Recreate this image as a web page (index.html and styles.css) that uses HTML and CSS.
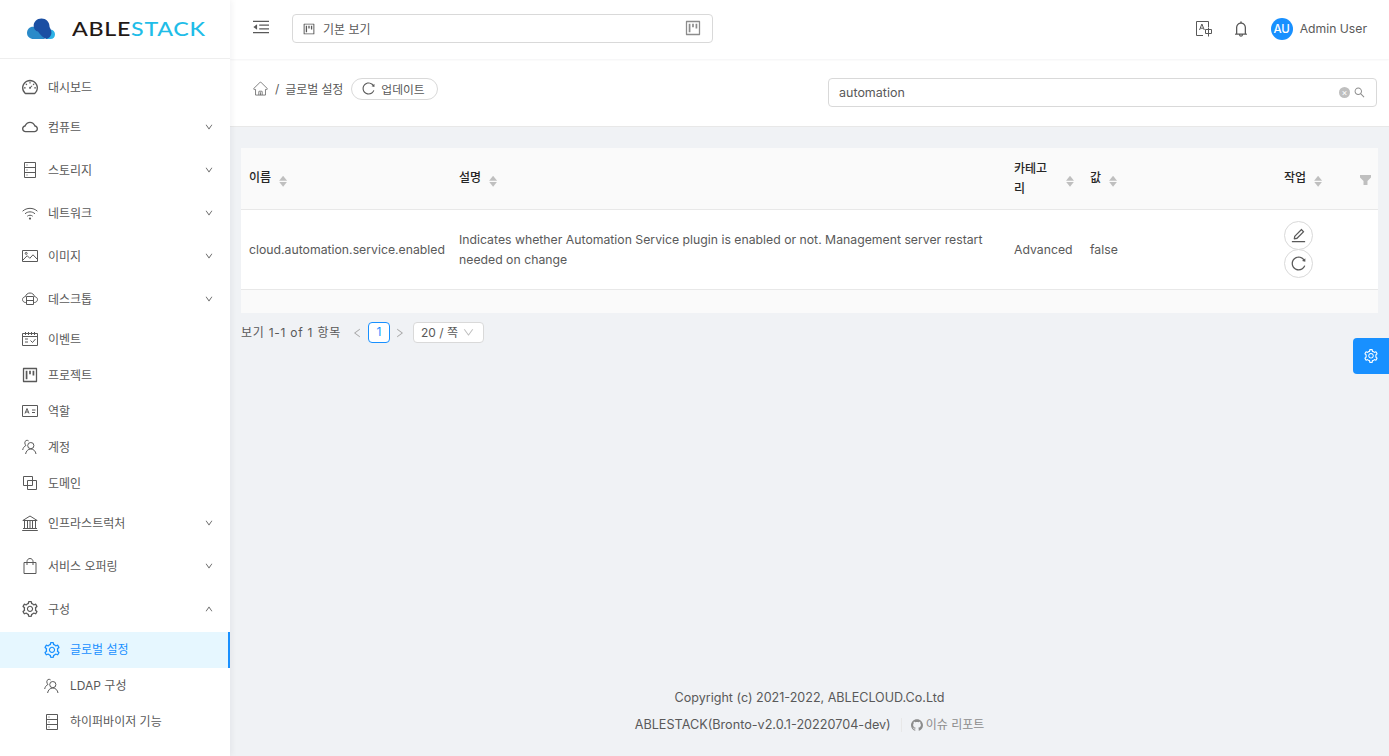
FILE: index.html
```html
<!DOCTYPE html>
<html lang="ko">
<head>
<meta charset="utf-8">
<title>글로벌 설정</title>
<link rel="stylesheet" href="styles.css">
</head>
<body>
<svg class="defs" width="0" height="0" aria-hidden="true">
  <symbol id="i-down" viewBox="64 64 896 896"><path d="M884 256h-75c-5.1 0-9.9 2.5-12.9 6.6L512 654.2 227.9 262.6c-3-4.1-7.8-6.6-12.9-6.6h-75c-6.5 0-10.3 7.4-6.5 12.7l352.6 486.1c12.8 17.6 39 17.6 51.7 0l352.6-486.1c3.9-5.3.1-12.7-6.4-12.7z"/></symbol>
  <symbol id="i-project" viewBox="64 64 896 896"><path d="M280 752h80c4.4 0 8-3.6 8-8V280c0-4.4-3.6-8-8-8h-80c-4.4 0-8 3.6-8 8v464c0 4.4 3.6 8 8 8zm192-280h80c4.4 0 8-3.6 8-8V280c0-4.4-3.6-8-8-8h-80c-4.4 0-8 3.6-8 8v184c0 4.4 3.6 8 8 8zm192 72h80c4.4 0 8-3.6 8-8V280c0-4.4-3.6-8-8-8h-80c-4.4 0-8 3.6-8 8v256c0 4.4 3.6 8 8 8zm216-432H144c-17.7 0-32 14.3-32 32v736c0 17.7 14.3 32 32 32h736c17.7 0 32-14.3 32-32V144c0-17.7-14.3-32-32-32zm-40 728H184V184h656v656z"/></symbol>
  <symbol id="i-reload" viewBox="64 64 896 896"><path d="M909.1 209.3l-56.4 44.1C775.8 155.1 656.2 92 521.9 92 290 92 102.3 279.5 102 511.5 101.7 743.7 289.8 932 521.9 932c181.3 0 335.8-115 394.6-276.1 1.5-4.2-.7-8.9-4.9-10.3l-56.7-19.5a8 8 0 0 0-10.1 4.8c-1.8 5-3.8 10-5.9 14.9-17.3 41-42.1 77.8-73.7 109.4A344.77 344.77 0 0 1 655.9 829c-42.3 17.9-87.4 27-133.8 27-46.5 0-91.5-9.1-133.8-27A341.5 341.5 0 0 1 279 755.2a342.16 342.16 0 0 1-73.7-109.4c-17.9-42.4-27-87.4-27-133.9s9.1-91.5 27-133.9c17.3-41 42.1-77.8 73.7-109.4 31.6-31.6 68.4-56.4 109.3-73.8 42.3-17.9 87.4-27 133.8-27 46.5 0 91.5 9.1 133.8 27a341.5 341.5 0 0 1 109.3 73.8c9.9 9.9 19.2 20.4 27.8 31.4l-60.2 47a8 8 0 0 0 3 14.1l175.6 43c5 1.2 9.9-2.6 9.9-7.7l.8-180.9c-.1-6.6-7.8-10.3-13-6.2z"/></symbol>
  <symbol id="i-setting" viewBox="64 64 896 896"><path d="M924.8 625.7l-65.5-56c3.1-19 4.7-38.4 4.7-57.8s-1.6-38.8-4.7-57.8l65.5-56a32.03 32.03 0 0 0 9.3-35.2l-.9-2.6a443.74 443.74 0 0 0-79.7-137.9l-1.8-2.1a32.12 32.12 0 0 0-35.1-9.5l-81.3 28.9c-30-24.6-63.5-44-99.7-57.6l-15.7-85a32.05 32.05 0 0 0-25.8-25.7l-2.7-.5c-52.1-9.4-106.9-9.4-159 0l-2.7.5a32.05 32.05 0 0 0-25.8 25.7l-15.8 85.4a351.86 351.86 0 0 0-99 57.4l-81.9-29.1a32 32 0 0 0-35.1 9.5l-1.8 2.1a446.02 446.02 0 0 0-79.7 137.9l-.9 2.6c-4.5 12.5-.8 26.5 9.3 35.2l66.3 56.6c-3.1 18.8-4.6 38-4.6 57.1 0 19.2 1.5 38.4 4.6 57.1L99 625.5a32.03 32.03 0 0 0-9.3 35.2l.9 2.6c18.1 50.4 44.9 96.9 79.7 137.9l1.8 2.1a32.12 32.12 0 0 0 35.1 9.5l81.9-29.1c29.8 24.5 63.1 43.9 99 57.4l15.8 85.4a32.05 32.05 0 0 0 25.8 25.7l2.7.5a449.4 449.4 0 0 0 159 0l2.7-.5a32.05 32.05 0 0 0 25.8-25.7l15.7-85a350 350 0 0 0 99.7-57.6l81.3 28.9a32 32 0 0 0 35.1-9.5l1.8-2.1c34.8-41.1 61.6-87.5 79.7-137.9l.9-2.6c4.5-12.3.8-26.3-9.3-35zM788.3 465.9c2.5 15.1 3.8 30.6 3.8 46.1s-1.3 31-3.8 46.1l-6.6 40.1 74.7 63.9a370.03 370.03 0 0 1-42.6 73.6L721 702.8l-31.4 25.8c-23.9 19.6-50.5 35-79.3 45.8l-38.1 14.3-17.9 97a377.5 377.5 0 0 1-85 0l-17.9-97.2-37.8-14.5c-28.5-10.8-55-26.2-78.7-45.7l-31.4-25.9-93.4 33.2c-17-22.9-31.2-47.6-42.6-73.6l75.5-64.5-6.5-40c-2.4-14.9-3.7-30.3-3.7-45.5 0-15.3 1.2-30.6 3.7-45.5l6.5-40-75.5-64.5c11.3-26.1 25.6-50.7 42.6-73.6l93.4 33.2 31.4-25.9c23.7-19.5 50.2-34.9 78.7-45.7l37.9-14.3 17.9-97.2c28.1-3.2 56.8-3.2 85 0l17.9 97 38.1 14.3c28.7 10.8 55.4 26.2 79.3 45.8l31.4 25.8 92.8-32.9c17 22.9 31.2 47.6 42.6 73.6L781.8 426l6.5 39.9zM512 326c-97.2 0-176 78.8-176 176s78.8 176 176 176 176-78.8 176-176-78.8-176-176-176zm79.2 255.2A111.6 111.6 0 0 1 512 614c-29.9 0-58-11.7-79.2-32.8A111.6 111.6 0 0 1 400 502c0-29.9 11.7-58 32.8-79.2C454 401.6 482.1 390 512 390c29.9 0 58 11.6 79.2 32.8A111.6 111.6 0 0 1 624 502c0 29.9-11.7 58-32.8 79.2z"/></symbol>
  <symbol id="i-bell" viewBox="64 64 896 896"><path d="M816 768h-24V428c0-141.1-104.3-257.7-240-277.1V112c0-22.1-17.9-40-40-40s-40 17.9-40 40v38.9c-135.7 19.4-240 136-240 277.1v340h-24c-17.7 0-32 14.3-32 32v32c0 4.4 3.6 8 8 8h216c0 61.8 50.2 112 112 112s112-50.2 112-112h216c4.4 0 8-3.6 8-8v-32c0-17.7-14.3-32-32-32zM512 888c-26.5 0-48-21.5-48-48h96c0 26.5-21.5 48-48 48zM304 768V428c0-55.6 21.6-107.8 60.9-147.1S456.4 220 512 220c55.6 0 107.8 21.6 147.1 60.9S720 372.4 720 428v340H304z"/></symbol>
  <symbol id="i-search" viewBox="64 64 896 896"><path d="M909.6 854.5L649.9 594.8C690.2 542.7 712 479 712 412c0-80.2-31.3-155.4-87.9-212.1-56.6-56.7-132-87.9-212.1-87.9s-155.5 31.3-212.1 87.9C143.2 256.5 112 331.8 112 412c0 80.1 31.3 155.5 87.9 212.1C256.5 680.8 331.8 712 412 712c67 0 130.6-21.8 182.7-62l259.7 259.6a8.2 8.2 0 0 0 11.6 0l43.6-43.5a8.2 8.2 0 0 0 0-11.6zM570.4 570.4C528 612.7 471.8 636 412 636s-116-23.3-158.4-65.6C211.3 528 188 471.8 188 412s23.3-116.1 65.6-158.4C296 211.3 352.2 188 412 188s116.1 23.2 158.4 65.6S636 352.2 636 412s-23.3 116.1-65.6 158.4z"/></symbol>
  <symbol id="i-edit" viewBox="64 64 896 896"><path d="M257.7 752c2 0 4-.2 6-.5L431.9 722c2-.4 3.9-1.3 5.3-2.8l423.9-423.9a9.96 9.96 0 0 0 0-14.1L694.9 114.9c-1.9-1.9-4.4-2.9-7.1-2.9s-5.2 1-7.1 2.9L256.8 538.8c-1.5 1.5-2.4 3.3-2.8 5.3l-29.5 168.2a33.5 33.5 0 0 0 9.4 29.8c6.6 6.4 14.9 9.9 23.8 9.9zm67.4-174.4L687.8 215l73.3 73.3-362.7 362.6-88.9 15.7 15.6-89zM880 836H144c-17.7 0-32 14.3-32 32v36c0 4.4 3.6 8 8 8h784c4.4 0 8-3.6 8-8v-36c0-17.7-14.3-32-32-32z"/></symbol>
  <symbol id="i-cloud" viewBox="64 64 896 896"><path d="M811.4 418.7C765.6 297.9 648.9 212 512.2 212S258.8 297.8 213 418.6C127.3 441.1 64 519.1 64 612c0 110.5 89.5 200 199.9 200h496.2C870.5 812 960 722.5 960 612c0-92.7-63.1-170.7-148.6-193.3zm36.3 281a123.07 123.07 0 0 1-87.6 36.3H263.9c-33.1 0-64.2-12.9-87.6-36.3A123.3 123.3 0 0 1 140 612c0-28 9.1-54.3 26.2-76.3a125.7 125.7 0 0 1 66.1-43.7l37.9-9.9 13.9-36.6c8.6-22.8 20.6-44.1 35.7-63.4a245.6 245.6 0 0 1 52.4-49.9c41.1-28.9 89.5-44.2 140-44.2s98.9 15.3 140 44.2c19.9 14 37.5 30.8 52.4 49.9 15.1 19.3 27.1 40.6 35.7 63.4l13.8 36.5 37.8 10c54.3 14.5 92.1 63.8 92.1 120 0 33.1-12.9 64.3-36.3 87.7z"/></symbol>
  <symbol id="i-github" viewBox="64 64 896 896"><path d="M511.6 76.3C264.3 76.2 64 276.4 64 523.5 64 718.9 189.3 885 363.8 946c23.5 5.9 19.9-10.8 19.9-22.2v-77.5c-135.7 15.9-141.2-73.9-150.3-88.9C215 726 171.5 718 184.5 703c30.9-15.9 62.4 4 98.9 57.9 26.4 39.1 77.9 32.5 104 26 5.7-23.5 17.9-44.5 34.7-60.8-140.6-25.2-199.2-111-199.2-213 0-49.5 16.3-95 48.3-131.7-20.4-60.5 1.9-112.3 4.9-120 58.1-5.2 118.5 41.6 123.2 45.3 33-8.9 70.7-13.6 112.9-13.6 42.4 0 80.2 4.9 113.5 13.9 11.3-8.6 67.3-48.8 121.3-43.9 2.9 7.7 24.7 58.3 5.5 118 32.4 36.8 48.9 82.7 48.9 132.3 0 102.2-59 188.1-200 212.9a127.5 127.5 0 0 1 38.1 91v112.5c.8 9 0 17.9 15 17.9 177.1-59.7 304.6-227 304.6-424.1 0-247.2-200.4-447.3-447.5-447.3z"/></symbol>
  <symbol id="i-home" viewBox="0 0 16 16"><path class="ln thin" d="M.8 8L7.300 1.600c.4-.4 1-.4 1.400 0L15.200 8c.3.5 0 1-.5 1H13.300v6H2.700V9H1.300c-.5 0-.8-.5-.5-1zM6.200 15v-3.800c0-.2.1-.3.300-.3h3c.2 0 .3.1.3.3V15M8 12v3"/></symbol>
  <symbol id="i-dashboard" viewBox="64 64 896 896"><path d="M924.8 385.6a446.7 446.7 0 0 0-96-142.4 446.7 446.7 0 0 0-142.4-96C631.1 123.8 572.5 112 512 112s-119.1 11.8-174.4 35.2a446.7 446.7 0 0 0-142.4 96 446.7 446.7 0 0 0-96 142.4C75.8 440.9 64 499.5 64 560c0 132.7 58.3 257.7 159.9 343.1l1.7 1.4c5.8 4.8 13.1 7.5 20.6 7.5h531.7c7.5 0 14.8-2.7 20.6-7.5l1.7-1.4C901.7 817.7 960 692.7 960 560c0-60.5-11.9-119.1-35.2-174.4zM761.4 836H262.6A371.12 371.12 0 0 1 140 560c0-99.4 38.7-192.8 109-263 70.3-70.3 163.7-109 263-109 99.4 0 192.8 38.7 263 109 70.3 70.3 109 163.7 109 263 0 105.6-44.5 205.5-122.6 276zM623.5 421.5a8.03 8.03 0 0 0-11.3 0L527.7 506c-18.7-5-39.4-.2-54.1 14.5a55.95 55.95 0 0 0 0 79.2 55.95 55.95 0 0 0 79.2 0 55.87 55.87 0 0 0 14.5-54.1l84.5-84.5c3.1-3.1 3.1-8.2 0-11.3l-28.3-28.3zM490 320h44c4.4 0 8-3.6 8-8v-80c0-4.4-3.6-8-8-8h-44c-4.4 0-8 3.6-8 8v80c0 4.4 3.6 8 8 8zm260 218v44c0 4.4 3.6 8 8 8h80c4.4 0 8-3.6 8-8v-44c0-4.4-3.6-8-8-8h-80c-4.4 0-8 3.6-8 8zm12.7-197.2l-31.1-31.1a8.03 8.03 0 0 0-11.3 0l-56.6 56.6a8.03 8.03 0 0 0 0 11.3l31.1 31.1c3.1 3.1 8.2 3.1 11.3 0l56.6-56.6c3.1-3.1 3.1-8.2 0-11.3zm-458.6-31.1a8.03 8.03 0 0 0-11.3 0l-31.1 31.1a8.03 8.03 0 0 0 0 11.3l56.6 56.6c3.1 3.1 8.2 3.1 11.3 0l31.1-31.1c3.1-3.1 3.1-8.2 0-11.3l-56.6-56.6zM262 530h-80c-4.4 0-8 3.6-8 8v44c0 4.4 3.6 8 8 8h80c4.4 0 8-3.6 8-8v-44c0-4.4-3.6-8-8-8z"/></symbol>
  <symbol id="i-storage" viewBox="0 0 16 16"><path class="ln" d="M2.500 .5h11v15h-11zM2.500 5.500h11M2.500 10.500h11"/><path class="ln" d="M4.500 3h1M4.500 8h1M4.500 13h1"/></symbol>
  <symbol id="i-wifi" viewBox="0 0 16 16"><path class="ln" d="M.6 6.200C4.600 2.400 11.400 2.400 15.400 6.200M3 8.800c2.800-2.600 7.200-2.600 10 0M5.300 11.200c1.500-1.300 3.900-1.300 5.400 0"/><circle cx="8" cy="13.600" r="1.100"/></symbol>
  <symbol id="i-picture" viewBox="0 0 16 16"><path class="ln" d="M.5 2.500h15v11H.5z"/><path class="ln" d="M1 12l4.200-4.300 2.600 2.600L11 6.800l4.400 4.600"/><circle class="ln" cx="4.200" cy="5.400" r="1"/></symbol>
  <symbol id="i-desktop" viewBox="0 0 16 16"><path class="ln" d="M3.400 5.600C4 3.400 5.800 2 8 2s4 1.400 4.600 3.600c1.700.3 2.900 1.500 2.900 2.900s-1.200 2.900-2.900 3H12M3.400 5.600C1.700 5.900.5 7 .5 8.500s1.200 2.900 2.900 3H4"/><path class="ln" d="M4.500 5.500h7v8h-7zM4.500 9.500h7"/></symbol>
  <symbol id="i-schedule" viewBox="0 0 16 16"><path class="ln" d="M.5 2.500h15v12H.5zM.5 5.500h15M3.500 1v3M6.500 1v3M9.500 1v3M12.500 1v3M3 8h3M3 11h3M8.500 9.500l2 2 3-3.500"/></symbol>
  <symbol id="i-idcard" viewBox="0 0 16 16"><path class="ln" d="M.5 2.500h15v11H.5zM10 7h3.500M10 9.500h3"/><path class="ln" d="M3 10.500L5 5.500l2 5M3.800 9h2.400"/></symbol>
  <symbol id="i-team" viewBox="0 0 16 16"><circle class="ln" cx="8.800" cy="6.600" r="3.100"/><path class="ln" d="M3.600 15c.4-2.800 2.400-5 5.200-5s4.800 2.200 5.200 5M6.600 1.900C5 .6 2.800 1.500 2.800 3.800c0 1.100.5 2 1.200 2.600C2.200 7.300 1 9 .7 11"/></symbol>
  <symbol id="i-block" viewBox="0 0 16 16"><path class="ln" d="M1.500 1.500h9v9h-9zM5.500 5.500h9v9h-9z"/></symbol>
  <symbol id="i-bank" viewBox="0 0 16 16"><path class="ln" d="M.8 5.500L8 1l7.200 4.500zM2.500 5.500v8M5.500 5.500v8M8 5.500v8M10.500 5.500v8M13.500 5.500v8M1 13.500h14M.2 15.500h15.600"/></symbol>
  <symbol id="i-bag" viewBox="0 0 16 16"><path class="ln" d="M2 4.500h12v11H2zM5 7V3.400C5 1.800 6.300 .5 8 .5s3 1.300 3 2.900V7"/></symbol>
  <symbol id="i-translate" viewBox="0 0 18 18"><path class="ln" d="M13.500 7V1.500h-12v14H8"/><path class="ln" d="M4.500 10l2.400-6 2.400 6M5.400 8.200h3"/><path class="ln" d="M10.500 9.500h6v4h-6zM13.500 7.500v9"/></symbol>
  <symbol id="i-outdent" viewBox="0 0 18 14"><path d="M0 0h18v1.300H0zM0 12.700h18V14H0zM7 4.200h11v1.300H7zM7 8.500h11v1.300H7zM4.600 4v6.200L.4 7.100z"/></symbol>
</svg>

<div class="app">
  <aside class="sidebar">
    <div class="logo">
      <svg class="logo-mark" viewBox="0 0 30 22" width="30" height="22" aria-hidden="true">
        <path fill="#2db2e6" d="M16 21h7.500c2.800 0 4.500-2 4.500-4.800 0-2.600-1.800-4.600-4.400-4.800L19 21z"/>
        <path fill="#2a8ac9" d="M6.500 21C3 21 0 18.500 0 15s2.500-6.200 6-6.200c3 0 5 1.500 7 4.500L18 21z"/>
        <path fill="#1b4fa3" d="M19.500 21c-3-.8-6.200-4-8.500-7.500-2.500-.2-4-3-4.300-5C6.200 4 10 .5 14.500 .5c4.500 0 8 3.500 8 8 0 .8 1 2 1.500 3.500C25.500 16.500 23 20 19.500 21z"/>
      </svg>
      <span class="logo-text"><span class="logo-dark">ABLE</span><span class="logo-cyan">STACK</span></span>
    </div>
    <nav class="menu">
      <a class="item"><svg class="ic"><use href="#i-dashboard"/></svg><span>대시보드</span></a>
      <a class="sub"><svg class="ic"><use href="#i-cloud"/></svg><span>컴퓨트</span><svg class="chev"><use href="#i-down"/></svg></a>
      <a class="sub"><svg class="ic"><use href="#i-storage"/></svg><span>스토리지</span><svg class="chev"><use href="#i-down"/></svg></a>
      <a class="sub"><svg class="ic"><use href="#i-wifi"/></svg><span>네트워크</span><svg class="chev"><use href="#i-down"/></svg></a>
      <a class="sub"><svg class="ic"><use href="#i-picture"/></svg><span>이미지</span><svg class="chev"><use href="#i-down"/></svg></a>
      <a class="sub"><svg class="ic"><use href="#i-desktop"/></svg><span>데스크톱</span><svg class="chev"><use href="#i-down"/></svg></a>
      <a class="item"><svg class="ic"><use href="#i-schedule"/></svg><span>이벤트</span></a>
      <a class="item"><svg class="ic"><use href="#i-project"/></svg><span>프로젝트</span></a>
      <a class="item"><svg class="ic"><use href="#i-idcard"/></svg><span>역할</span></a>
      <a class="item"><svg class="ic"><use href="#i-team"/></svg><span>계정</span></a>
      <a class="item"><svg class="ic"><use href="#i-block"/></svg><span>도메인</span></a>
      <a class="sub"><svg class="ic"><use href="#i-bank"/></svg><span>인프라스트럭처</span><svg class="chev"><use href="#i-down"/></svg></a>
      <a class="sub"><svg class="ic"><use href="#i-bag"/></svg><span>서비스 오퍼링</span><svg class="chev"><use href="#i-down"/></svg></a>
      <a class="sub"><svg class="ic"><use href="#i-setting"/></svg><span>구성</span><svg class="chev up"><use href="#i-down"/></svg></a>
      <a class="child active"><svg class="ic"><use href="#i-setting"/></svg><span>글로벌 설정</span></a>
      <a class="child"><svg class="ic"><use href="#i-team"/></svg><span>LDAP 구성</span></a>
      <a class="child"><svg class="ic"><use href="#i-storage"/></svg><span>하이퍼바이저 기능</span></a>
    </nav>
  </aside>

  <div class="main">
    <header class="topbar">
      <svg class="outdent"><use href="#i-outdent"/></svg>
      <div class="project-select">
        <svg class="ps-ic"><use href="#i-project"/></svg>
        <span class="ps-label">기본 보기</span>
        <svg class="ps-end"><use href="#i-project"/></svg>
      </div>
      <div class="top-right">
        <svg class="tr-translate"><use href="#i-translate"/></svg>
        <svg class="tr-bell"><use href="#i-bell"/></svg>
        <span class="avatar">AU</span>
        <span class="user">Admin User</span>
      </div>
    </header>

    <section class="crumbbar">
      <svg class="home"><use href="#i-home"/></svg>
      <span class="slash">/</span>
      <span class="crumb">글로벌 설정</span>
      <button class="refresh" type="button"><svg><use href="#i-reload"/></svg><span>업데이트</span></button>
      <div class="search">
        <span class="search-text">automation</span>
        <span class="clear">×</span>
        <svg class="search-ic"><use href="#i-search"/></svg>
      </div>
    </section>

    <main class="content">
      <table class="grid">
        <colgroup>
          <col class="c1"><col class="c2"><col class="c3"><col class="c4"><col class="c5">
        </colgroup>
        <thead>
          <tr>
            <th><div class="th"><span>이름</span><i class="sort"></i></div></th>
            <th><div class="th"><span>설명</span><i class="sort"></i></div></th>
            <th><div class="th th-cat"><span>카테고리</span><i class="sort"></i></div></th>
            <th><div class="th"><span>값</span><i class="sort"></i></div></th>
            <th class="th-last"><div class="th"><span>작업</span><i class="sort"></i></div><i class="funnel"></i></th>
          </tr>
        </thead>
        <tbody>
          <tr>
            <td>cloud.automation.service.enabled</td>
            <td>Indicates whether Automation Service plugin is enabled or not. Management server restart needed on change</td>
            <td>Advanced</td>
            <td>false</td>
            <td class="acts">
              <button class="round" type="button"><svg><use href="#i-edit"/></svg></button>
              <button class="round" type="button"><svg><use href="#i-reload"/></svg></button>
            </td>
          </tr>
        </tbody>
        <tfoot><tr><td colspan="5"></td></tr></tfoot>
      </table>

      <div class="pager">
        <span class="total">보기 1-1 of 1 항목</span>
        <svg class="pg-arrow left"><use href="#i-down"/></svg>
        <span class="pg-num">1</span>
        <svg class="pg-arrow right"><use href="#i-down"/></svg>
        <span class="pg-size">20 / 쪽<svg><use href="#i-down"/></svg></span>
      </div>

      <footer class="foot">
        <div class="foot-1">Copyright (c) 2021-2022, ABLECLOUD.Co.Ltd</div>
        <div class="foot-2"><span>ABLESTACK(Bronto-v2.0.1-20220704-dev)</span><span class="foot-sep"></span><svg><use href="#i-github"/></svg><span class="foot-link">이슈 리포트</span></div>
      </footer>
    </main>
  </div>
</div>

<div class="float-btn"><svg><use href="#i-setting"/></svg></div>
</body>
</html>
```

FILE: styles.css
```css
* { box-sizing: border-box; }
html, body { margin: 0; height: 100%; overflow: hidden; }
body {
  font-family: Inter, "Noto Sans CJK KR", sans-serif;
  font-size: 12.25px;
  color: #595959;
  background: #f0f2f5;
}
.defs { position: absolute; }
svg { fill: currentColor; display: block; flex: none; }
.ln { fill: none; stroke: currentColor; stroke-width: 1; }
.ln.thin { stroke-width: .8; }

.app { display: flex; height: 756px; }

/* sidebar */
.sidebar {
  width: 230px;
  flex: none;
  background: #fff;
  box-shadow: 2px 0 6px rgba(0, 21, 41, .05);
  position: relative;
  z-index: 2;
}
.logo {
  height: 59px;
  display: flex;
  align-items: center;
  padding-left: 27px;
  border-bottom: 1px solid #eeeeee;
}
.logo-mark { margin-top: -1px; }
.logo-text {
  margin-left: 15px;
  font-family: Lato, sans-serif;
  font-size: 19.5px;
  font-weight: 500;
  letter-spacing: .6px;
  line-height: 1;
  transform: scaleX(1.19);
  transform-origin: left center;
}
.logo-dark { color: #231815; }
.logo-cyan { color: #1fbde8; }

.menu { display: flex; flex-direction: column; padding-top: 10px; }
.item, .sub, .child {
  display: flex;
  align-items: center;
  padding-left: 22px;
  font-size: 12px;
  color: #595959;
}
.menu span { padding-bottom: 2px; }
.item { height: 36px; }
.sub { height: 40px; }
.sub + .sub { margin-top: 3px; }
.item + .sub, .sub + .item { margin-top: 2px; }
.ic { width: 16px; height: 16px; margin-right: 10px; }
.chev { width: 8px; height: 8px; margin-left: auto; margin-right: 17px; }
.chev.up { transform: rotate(180deg); }
.child { height: 36px; padding-left: 44px; }
.child span { padding-bottom: 3px; }
.sub + .child { margin-top: 3px; }
.child.active {
  background: #e6f7ff;
  color: #1890ff;
  border-right: 2px solid #1890ff;
}

/* main column */
.main { flex: 1; min-width: 0; display: flex; flex-direction: column; }
.topbar {
  height: 59px;
  flex: none;
  background: #fff;
  display: flex;
  align-items: center;
  padding: 0 22px 2px 23px;
  box-shadow: 0 1px 2px rgba(0, 21, 41, .05);
  position: relative;
  z-index: 1;
}
.outdent { width: 16px; height: 14px; color: #595959; margin-top: -3px; }
.project-select {
  width: 421px;
  height: 29px;
  margin-left: 23px;
  border: 1px solid #d9d9d9;
  border-radius: 4px;
  display: flex;
  align-items: center;
  padding: 0 11px 0 10px;
  font-size: 12px;
}
.ps-ic { width: 12px; height: 12px; color: #595959; }
.ps-label { margin-left: 8px; }
.ps-end { width: 16px; height: 16px; margin-left: auto; color: #8c8c8c; margin-top: -2px; }
.top-right { margin-left: auto; display: flex; align-items: center; }
.tr-translate { width: 18px; height: 18px; color: #595959; }
.tr-bell { width: 16px; height: 16px; margin-left: 20px; color: #595959; }
.avatar {
  width: 22px;
  height: 22px;
  border-radius: 50%;
  background: #1890ff;
  color: #fff;
  font-size: 11.5px;
  font-weight: 500;
  display: flex;
  align-items: center;
  justify-content: center;
  margin-left: 22px;
}
.user { margin-left: 7px; font-size: 12.2px; }

.crumbbar {
  height: 68px;
  flex: none;
  background: #fff;
  border-bottom: 1px solid #e8e8e8;
  display: flex;
  align-items: center;
  padding: 0 12px 8px 22px;
  font-size: 12px;
}
.home { width: 15px; height: 15px; color: #595959; margin-left: 1px; }
.slash { margin-left: 7px; }
.crumb { margin-left: 6px; letter-spacing: -.1px; }
.refresh {
  height: 22px;
  margin-left: 8px;
  padding: 0 12px 0 10px;
  border: 1px solid #d9d9d9;
  border-radius: 11px;
  background: #fff;
  color: #595959;
  font: inherit;
  font-size: 11.8px;
  display: flex;
  align-items: center;
  gap: 6px;
}
.refresh svg { width: 13px; height: 13px; }
.search {
  margin-left: auto;
  margin-top: 8px;
  width: 549px;
  height: 29px;
  border: 1px solid #d9d9d9;
  border-radius: 4px;
  display: flex;
  align-items: center;
  padding: 0 11px 0 10px;
  font-size: 12.5px;
}
.clear {
  margin-left: auto;
  width: 11px;
  height: 11px;
  border-radius: 50%;
  background: #bfbfbf;
  color: #fff;
  font-size: 9px;
  line-height: 11px;
  text-align: center;
}
.search-ic { width: 11px; height: 11px; margin-left: 4px; color: #8c8c8c; }

/* content */
.content { flex: 1; padding: 21px 11px 0 11px; display: flex; flex-direction: column; min-height: 0; }
.grid {
  width: 1137px;
  border-collapse: collapse;
  table-layout: fixed;
  background: #fff;
}
.c1 { width: 210px; }
.c2 { width: 555px; }
.c3 { width: 76px; }
.c4 { width: 194px; }
.c5 { width: 102px; }
.grid th {
  height: 61px;
  background: #fafafa;
  border-bottom: 1px solid #e8e8e8;
  padding: 1px 8px 0;
  text-align: left;
  font-weight: 500;
  font-size: 12px;
  color: #262626;
  line-height: 20px;
}
.th { display: flex; align-items: center; margin-top: -2px; }
.th.th-cat { margin-top: 0; }
.sort {
  position: relative;
  display: block;
  margin: 7px 0 0 8px;
  width: 8px;
  height: 11px;
  flex: none;
}
.sort::before, .sort::after {
  content: "";
  position: absolute;
  left: 0;
  width: 8px;
  height: 5px;
  background: #bfbfbf;
}
.sort::before { top: 0; clip-path: polygon(50% 0, 100% 100%, 0 100%); }
.sort::after { bottom: 0; clip-path: polygon(0 0, 100% 0, 50% 100%); }
.th-cat span { width: 36px; }
.th-cat .sort { margin: 5px 0 0 16px; }
.th-last { position: relative; }
.funnel {
  position: absolute;
  right: 7px;
  top: 27px;
  width: 11px;
  height: 10px;
  background: #bfbfbf;
  clip-path: polygon(0 0, 100% 0, 100% 25%, 68% 60%, 68% 100%, 32% 100%, 32% 60%, 0 25%);
}
.grid td {
  height: 80px;
  padding: 2px 8px 0;
  border-bottom: 1px solid #e8e8e8;
  font-size: 12.25px;
  line-height: 20px;
  vertical-align: middle;
}
.grid .acts { padding-top: 0; }
.round {
  width: 29px;
  height: 29px;
  border: 1px solid #d9d9d9;
  border-radius: 50%;
  background: #fff;
  color: #595959;
  padding: 0;
  display: flex;
  align-items: center;
  justify-content: center;
  margin-bottom: -1px;
}
.round svg { width: 15px; height: 15px; }
.grid tfoot td { height: 24px; padding: 0; background: #fafafa; border: 0; }

.pager { display: flex; align-items: center; margin-top: 9px; height: 21px; font-size: 12px; }
.total { width: 110px; letter-spacing: .75px; white-space: nowrap; padding-bottom: 2px; }
.pg-arrow { width: 10px; height: 10px; color: #a6a6a6; }
.pg-arrow.left { transform: rotate(90deg); margin-left: 1px; }
.pg-arrow.right { transform: rotate(-90deg); margin-left: 5px; }
.pg-num {
  width: 22px;
  height: 21px;
  margin-left: 6px;
  padding-bottom: 2px;
  border: 1px solid #1890ff;
  border-radius: 4px;
  background: #fff;
  color: #1890ff;
  display: flex;
  align-items: center;
  justify-content: center;
}
.pg-size {
  width: 71px;
  height: 21px;
  margin-left: 8px;
  border: 1px solid #d9d9d9;
  border-radius: 4px;
  background: #fff;
  display: flex;
  align-items: center;
  padding: 0 9px 2px 7px;
}
.pg-size svg { width: 11px; height: 11px; margin: 2px 0 0 auto; color: #bfbfbf; }

.foot { margin-top: auto; padding-bottom: 21px; text-align: center; font-size: 12.55px; line-height: 20px; }
.foot-2 { display: flex; align-items: center; justify-content: center; margin-top: 7px; font-size: 12.65px; }
.foot-sep { width: 1px; height: 14px; background: #e8e8e8; margin: 0 9px 0 10px; }
.foot-2 svg { width: 12px; height: 12px; color: #8c8c8c; }
.foot-link { margin-left: 3px; color: #8c8c8c; font-size: 12px; }

.float-btn {
  position: fixed;
  right: 0;
  top: 338px;
  width: 36px;
  height: 36px;
  border-radius: 4px 0 0 4px;
  background: #1890ff;
  color: #fff;
  display: flex;
  align-items: center;
  justify-content: center;
}
.float-btn svg { width: 14px; height: 14px; }
```
